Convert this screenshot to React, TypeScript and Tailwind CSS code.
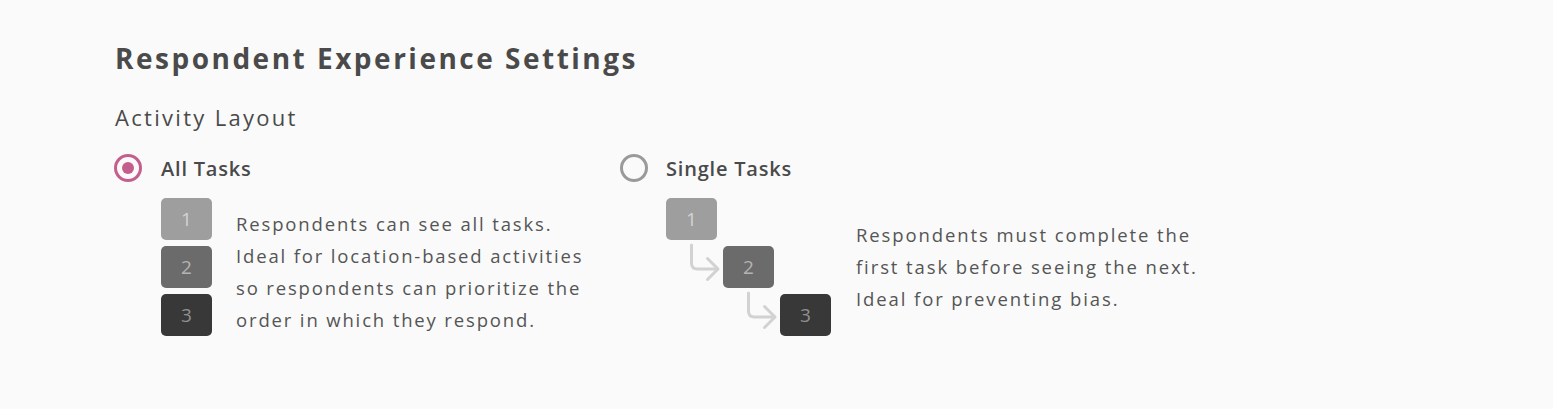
import React from "react";

const font = { fontFamily: "'Open Sans', 'Noto Sans', sans-serif" };

function Box({ n, bg, fg }: { n: number; bg: string; fg: string }) {
  return (
    <div
      className={`w-[51px] h-[42px] rounded-[5px] flex items-center justify-center text-[19px] leading-none font-medium ${bg} ${fg}`}
    >
      {n}
    </div>
  );
}

function Arrow() {
  return (
    <svg width="60" height="90" viewBox="0 0 60 90" fill="none" className="block">
      <path
        d="M25.5 47 V65 Q25.5 71 31.5 71 H51.5"
        stroke="#d2d2d2"
        strokeWidth="3"
        strokeLinecap="round"
        strokeLinejoin="round"
      />
      <path
        d="M41.5 60.5 L52 71 L41.5 81.5"
        stroke="#d2d2d2"
        strokeWidth="3"
        strokeLinecap="round"
        strokeLinejoin="round"
      />
    </svg>
  );
}

function Radio({ checked }: { checked: boolean }) {
  return checked ? (
    <div className="w-[28px] h-[28px] rounded-full border-[3px] border-[#c45f8d] flex items-center justify-center shrink-0">
      <div className="w-[12px] h-[12px] rounded-full bg-[#c45f8d]" />
    </div>
  ) : (
    <div className="w-[28px] h-[28px] rounded-full border-[3px] border-[#9a9a9a] shrink-0" />
  );
}

export default function App() {
  return (
    <div className="w-full h-[409px] bg-[#fafafa] pl-[115px] pt-[41px]" style={font}>
      <h1 className="text-[28px] leading-[34px] font-bold text-[#4a4a4a] tracking-[2.5px]">
        Respondent Experience Settings
      </h1>
      <h2 className="mt-[29px] text-[22px] leading-[26px] font-medium text-[#4a4a4a] tracking-[2.3px]">
        Activity Layout
      </h2>
      <div className="mt-[24px] flex">
        {/* All tasks */}
        <div className="w-[506px] -ml-px">
          <div className="flex items-center h-[28px]">
            <Radio checked />
            <span className="ml-[19px] mt-[2px] text-[20px] leading-[28px] font-semibold text-[#4a4a4a] tracking-[0.8px]">
              All Tasks
            </span>
          </div>
          <div className="mt-[16px] ml-[47px] flex items-start">
            <div className="flex flex-col gap-[6px]">
              <Box n={1} bg="bg-[#9e9e9e]" fg="text-[#d4d4d4]" />
              <Box n={2} bg="bg-[#6b6b6b]" fg="text-[#b4b4b4]" />
              <Box n={3} bg="bg-[#383838]" fg="text-[#909090]" />
            </div>
            <p className="ml-[24px] mt-[10px] text-[18.5px] leading-[32px] text-[#555555] whitespace-nowrap tracking-[1.85px]">
              <span className="block">Respondents can see all tasks.</span>
              <span className="block">Ideal for location-based activities</span>
              <span className="block">so respondents can prioritize the</span>
              <span className="block">order in which they respond.</span>
            </p>
          </div>
        </div>
        {/* Single tasks */}
        <div>
          <div className="flex items-center h-[28px]">
            <Radio checked={false} />
            <span className="ml-[18px] mt-[2px] text-[20px] leading-[28px] font-semibold text-[#4a4a4a] tracking-[0.8px]">
              Single Tasks
            </span>
          </div>
          <div className="mt-[16px] ml-[46px] flex items-start">
            <div className="relative w-[165px] flex flex-col gap-[6px]">
              <Box n={1} bg="bg-[#9e9e9e]" fg="text-[#d4d4d4]" />
              <div className="ml-[57px]">
                <Box n={2} bg="bg-[#6b6b6b]" fg="text-[#b4b4b4]" />
              </div>
              <div className="ml-[114px]">
                <Box n={3} bg="bg-[#383838]" fg="text-[#909090]" />
              </div>
              <div className="absolute left-0 top-0">
                <Arrow />
              </div>
              <div className="absolute left-[57px] top-[48px]">
                <Arrow />
              </div>
            </div>
            <p className="ml-[25px] mt-[21px] text-[18.5px] leading-[32px] text-[#555555] whitespace-nowrap tracking-[1.9px]">
              <span className="block">Respondents must complete the</span>
              <span className="block">first task before seeing the next.</span>
              <span className="block">Ideal for preventing bias.</span>
            </p>
          </div>
        </div>
      </div>
    </div>
  );
}
